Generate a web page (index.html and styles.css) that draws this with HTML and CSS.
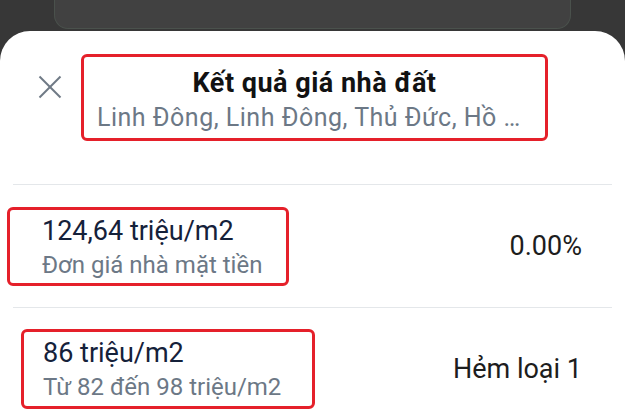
FILE: index.html
```html
<!DOCTYPE html>
<html lang="vi">
<head>
    <meta charset="UTF-8">
    <meta name="viewport" content="width=device-width, initial-scale=1.0">
    <link rel="stylesheet" href="styles.css">
    <title>Kết quả giá nhà đất</title>
</head>
<body>
    <div class="backdrop">
        <div class="backdrop-card"></div>
    </div>
    <div class="sheet">
        <div class="sheet-header">
            <button class="close-btn" aria-label="Đóng">
                <svg width="24" height="24" viewBox="0 0 24 24">
                    <line x1="1.5" y1="1.5" x2="22.5" y2="22.5" />
                    <line x1="22.5" y1="1.5" x2="1.5" y2="22.5" />
                </svg>
            </button>
            <div class="mark mark-header">
                <h1 class="sheet-title">Kết quả giá nhà đất</h1>
                <p class="sheet-subtitle">Linh Đông, Linh Đông, Thủ Đức, Hồ …</p>
            </div>
        </div>

        <div class="divider"></div>

        <div class="result-row">
            <div class="mark mark-first">
                <div class="price">124,64 triệu/m2</div>
                <div class="price-note">Đơn giá nhà mặt tiền</div>
            </div>
            <div class="row-value">0.00%</div>
        </div>

        <div class="divider"></div>

        <div class="result-row">
            <div class="mark mark-second">
                <div class="price">86 triệu/m2</div>
                <div class="price-note">Từ 82 đến 98 triệu/m2</div>
            </div>
            <div class="row-value">Hẻm loại 1</div>
        </div>
    </div>
</body>
</html>
```

FILE: styles.css
```css
* {
    box-sizing: border-box;
}

body {
    font-family: Roboto, "Noto Sans", Arial, sans-serif;
    background-color: #373737;
    margin: 0;
    padding: 0;
    height: 420px;
    overflow: hidden;
}

/* dimmed page behind the sheet */
.backdrop {
    height: 31px;
    padding: 0 54px;
}

.backdrop-card {
    height: 29px;
    background-color: #414141;
    border: 1px solid #4a514c;
    border-top: none;
    border-radius: 0 0 14px 14px;
}

.sheet {
    background-color: #fff;
    border-radius: 30px 30px 0 0;
    height: 389px;
    padding-top: 23px;
}

.sheet-header {
    display: flex;
    align-items: flex-start;
    padding-left: 38px;
}

.close-btn {
    width: 24px;
    height: 24px;
    margin-top: 21px;
    margin-right: 19px;
    padding: 0;
    border: none;
    background: none;
}

.close-btn svg {
    display: block;
    stroke: #6f7985;
    stroke-width: 2;
}

/* red highlight boxes */
.mark {
    border: 3px solid #e5202a;
    border-radius: 6px;
}

.mark-header {
    width: 467px;
    height: 87px;
    padding: 9px 13px 0;
}

.sheet-title {
    margin: 0;
    font-size: 27px;
    line-height: 35px;
    font-weight: 700;
    letter-spacing: 0.5px;
    text-align: center;
    color: #121212;
}

.sheet-subtitle {
    margin: 0;
    font-size: 25px;
    line-height: 34px;
    letter-spacing: 0.5px;
    color: #6c7886;
    white-space: nowrap;
    overflow: hidden;
}

.divider {
    height: 1px;
    margin: 43px 13px 0;
    background-color: #e4e7ea;
}

.result-row + .divider {
    margin-top: 0;
}

.result-row {
    display: flex;
    align-items: center;
    justify-content: space-between;
    height: 122px;
    padding-right: 43px;
}

.mark-first {
    width: 282px;
    height: 79px;
    margin-left: 7px;
    padding: 4px 0 0 32px;
}

.mark-second {
    width: 294px;
    height: 80px;
    margin-left: 21px;
    padding: 4px 0 0 19px;
}

.price {
    font-size: 27px;
    line-height: 34px;
    color: #15213a;
}

.price-note {
    font-size: 24px;
    line-height: 34px;
    color: #6c7886;
}

.row-value {
    font-size: 27px;
    line-height: 34px;
    color: #1d1d1d;
}
```
